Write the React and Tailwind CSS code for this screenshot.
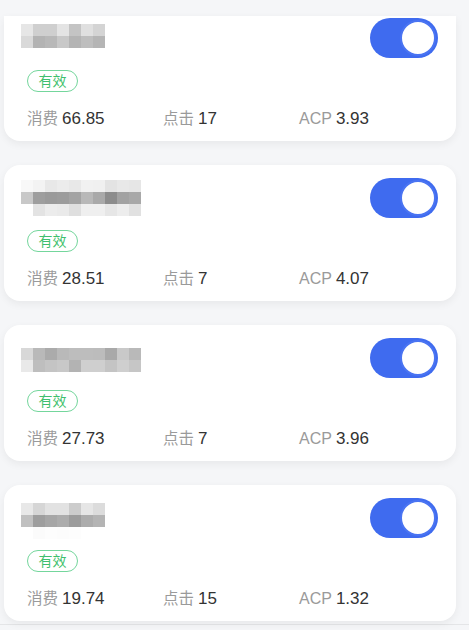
import React from "react";

const cards = [
  {
    spend: "66.85",
    clicks: "17",
    acp: "3.93",
    first: true,
    nameTop: 6,
    rows: [
      ["#e6e6e6", "#cfcfcf", "#cfcfcf", "#e4e4e4", "#c4c4c4", "#e0e0e0", "#d4d4d4"],
      ["#d9d9d9", "#b3b3b3", "#b8b8b8", "#c8c8c8", "#b4b4b4", "#bebebe", "#b5b5b5"],
    ],
  },
  {
    spend: "28.51",
    clicks: "7",
    acp: "4.07",
    nameTop: 2,
    rows: [
      ["#f8f8f8", "#f3f3f3", "#e8e8e8", "#ececec", "#e8e8e8", "#f1f1f1", "#f0f0f0", "#e3e3e3", "#e8e8e8", "#e6e6e6"],
      ["#c8c8c8", "#9e9e9e", "#9a9a9a", "#9c9c9c", "#a3a3a3", "#b8b8b8", "#a9a9a9", "#8c8c8c", "#a2a2a2", "#a8a8a8"],
      ["#ffffff", "#e3e3e3", "#ececec", "#eaeaea", "#dfdfdf", "#efefef", "#efefef", "#e6e6e6", "#ededed", "#e1e1e1"],
    ],
  },
  {
    spend: "27.73",
    clicks: "7",
    acp: "3.96",
    nameTop: 10,
    rows: [
      ["#d8d8d8", "#b9b9b9", "#ababab", "#b9b9b9", "#bdbdbd", "#bdbdbd", "#bcbcbc", "#a9a9a9", "#c9c9c9", "#b9b9b9"],
      ["#e9e9e9", "#bebebe", "#c4c4c4", "#c8c8c8", "#b3b3b3", "#cfcfcf", "#cfcfcf", "#c4c4c4", "#cfcfcf", "#c6c6c6"],
    ],
  },
  {
    spend: "19.74",
    clicks: "15",
    acp: "1.32",
    nameTop: 5,
    rows: [
      ["#e8e8e8", "#d6d6d6", "#e2e2e2", "#e2e2e2", "#cccccc", "#e6e6e6", "#dcdcdc"],
      ["#c0c0c0", "#9e9e9e", "#a6a6a6", "#acacac", "#9c9c9c", "#acacac", "#b4b4b4"],
      ["#ffffff", "#fbfbfb", "#fdfdfd", "#fcfcfc", "#fdfdfd", "#ffffff", "#ffffff"],
    ],
  },
];

// pixelated (blurred) campaign name
const Mosaic = ({ rows, top }) => (
  <div className="-ml-[6px] flex flex-col" style={{ marginTop: top }}>
    {rows.map((row, i) => (
      <div key={i} className="flex">
        {row.map((c, j) => (
          <div key={j} className="h-[12px] w-[12px]" style={{ backgroundColor: c }} />
        ))}
      </div>
    ))}
  </div>
);

const Toggle = () => (
  <div className="flex h-[40px] w-[68px] items-center justify-end rounded-full bg-[#3f6bef] pr-[2px]">
    <div className="h-[36px] w-[36px] rounded-full border-2 border-[#4a74f2] bg-white" />
  </div>
);

const Stat = ({ label, value, latin }) => (
  <div className="flex w-[136px] items-center gap-[4px] leading-[20px]">
    <span className={`${latin ? "text-[16px]" : "text-[15.5px]"} text-[#9a9a9a]`}>{label}</span>
    <span className="text-[17px] text-[#333333]">{value}</span>
  </div>
);

const Card = ({ card }) => (
  <div
    className={`bg-white pb-[12px] pl-[23px] pr-[18px] shadow-[0_3px_8px_rgba(0,0,0,0.06)] ${
      card.first ? "rounded-b-[16px] pt-[2px]" : "rounded-[16px] pt-[13px]"
    }`}
  >
    <div className="flex h-[40px] items-start justify-between">
      <Mosaic rows={card.rows} top={card.nameTop} />
      <Toggle />
    </div>
    <div className="mt-[12px] flex h-[22px] w-[51px] items-center justify-center rounded-full border border-[#74d69c] text-[14px] text-[#3fbf6e]">
      有效
    </div>
    <div className="mt-[17px] flex">
      <Stat label="消费" value={card.spend} />
      <Stat label="点击" value={card.clicks} />
      <Stat label="ACP" value={card.acp} latin />
    </div>
  </div>
);

export default function App() {
  return (
    <div
      className="h-[630px] w-[469px] overflow-hidden bg-[#f5f6f8] pt-[16px]"
      style={{ fontFamily: '"Liberation Sans", "Noto Sans CJK SC", sans-serif' }}
    >
      <div className="flex flex-col gap-[24px] pl-[4px] pr-[13px]">
        {cards.map((card, i) => (
          <Card key={i} card={card} />
        ))}
      </div>
      <div className="mt-[3px] h-px bg-[#e4e5e7]" />
    </div>
  );
}
